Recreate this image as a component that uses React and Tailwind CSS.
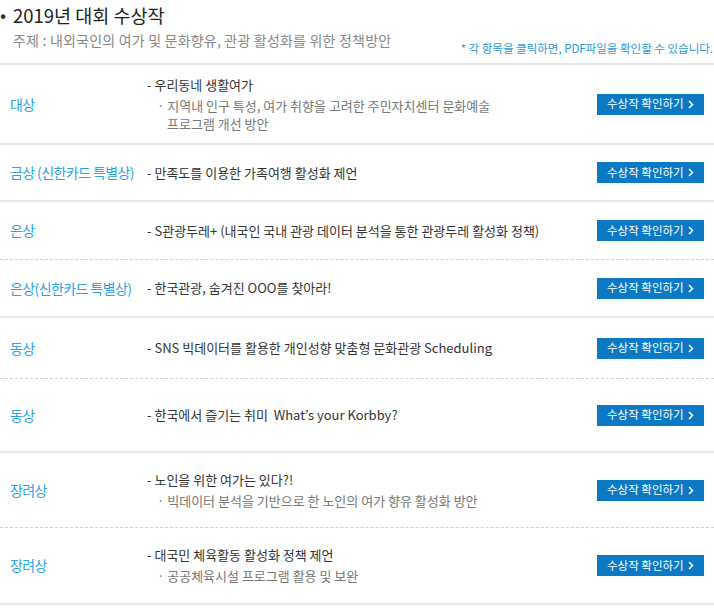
import React from 'react';

// 수상작 목록. h = 행 높이, dash = 아래 구분선 점선 여부
const AWARDS = [
  { label: '대상', h: 80, title: '- 우리동네 생활여가', sub: ['지역내 인구 특성, 여가 취향을 고려한 주민자치센터 문화예술', '프로그램 개선 방안'] },
  { label: '금상 (신한카드 특별상)', h: 57, title: '- 만족도를 이용한 가족여행 활성화 제언' },
  { label: '은상', h: 58, dash: true, title: '- S관광두레+ (내국인 국내 관광 데이터 분석을 통한 관광두레 활성화 정책)' },
  { label: '은상(신한카드 특별상)', h: 58, title: '- 한국관광, 숨겨진 OOO를 찾아라!' },
  { label: '동상', h: 61, dash: true, title: '- SNS 빅데이터를 활용한 개인성향 맞춤형 문화관광 Scheduling' },
  { label: '동상', h: 74, title: '- 한국에서 즐기는 취미  What\u2019s your Korbby?' },
  { label: '장려상', h: 75, dash: true, title: '- 노인을 위한 여가는 있다?!', sub: ['빅데이터 분석을 기반으로 한 노인의 여가 향유 활성화 방안'] },
  { label: '장려상', h: 77, title: '- 대국민 체육활동 활성화 정책 제언', sub: ['공공체육시설 프로그램 활용 및 보완'] },
];

const font = { fontFamily: '"Noto Sans CJK KR", "Noto Sans", sans-serif' };

export default function App() {
  return (
    <div className="w-[714px] h-[610px] bg-white overflow-hidden text-[#333]" style={font}>
      <div className="flex items-center h-[30px]">
        <span className="text-[18px] leading-none w-[13px] -mt-[2px]">•</span>
        <h2 className="text-[18.5px] leading-none text-[#222] whitespace-pre">2019년 대회 수상작</h2>
      </div>
      <div className="relative h-[33px]">
        <p className="pl-[13px] pt-[2px] text-[14px] leading-[16px] text-[#888] tracking-[0.2px] whitespace-nowrap">
          주제 : 내외국인의 여가 및 문화향유, 관광 활성화를 위한 정책방안
        </p>
        <p className="absolute right-[1px] top-[11px] text-[11.5px] leading-[14px] text-[#2a98dc] whitespace-nowrap">
          * 각 항목을 클릭하면, PDF파일을 확인할 수 있습니다.
        </p>
      </div>
      <div className="border-t-2 border-[#e8e8e8]" />

      {AWARDS.map((a, i) => (
        <div
          key={i}
          className={`flex items-center pl-[10px] pr-[10px] ${a.dash ? 'border-b border-dashed border-[#d2d2d2]' : 'border-b-2 border-[#e8e8e8]'}`}
          style={{ height: a.h }}
        >
          <div className="w-[137px] shrink-0 text-[14px] text-[#29a3e6] tracking-[-0.6px] whitespace-nowrap">{a.label}</div>
          <div className="flex-grow min-w-0">
            <p className="text-[13px] leading-[18px] text-[#333] whitespace-pre">{a.title}</p>
            {a.sub && (
              <div className="mt-[3px] pl-[10px] text-[13px] leading-[18px] text-[#777]">
                <p className="whitespace-nowrap">· {a.sub[0]}</p>
                {a.sub[1] && <p className="pl-[10px] whitespace-nowrap">{a.sub[1]}</p>}
              </div>
            )}
          </div>
          <button className="shrink-0 w-[107px] h-[21px] bg-[#0b79c4] text-white text-[11.5px] flex items-center justify-between pl-[10px] pr-[10px]">
            <span>수상작 확인하기</span>
            <svg width="6" height="9" viewBox="0 0 6 9" fill="none">
              <path d="M1 1l3.5 3.5L1 8" stroke="white" strokeWidth="1.5" />
            </svg>
          </button>
        </div>
      ))}
    </div>
  );
}
